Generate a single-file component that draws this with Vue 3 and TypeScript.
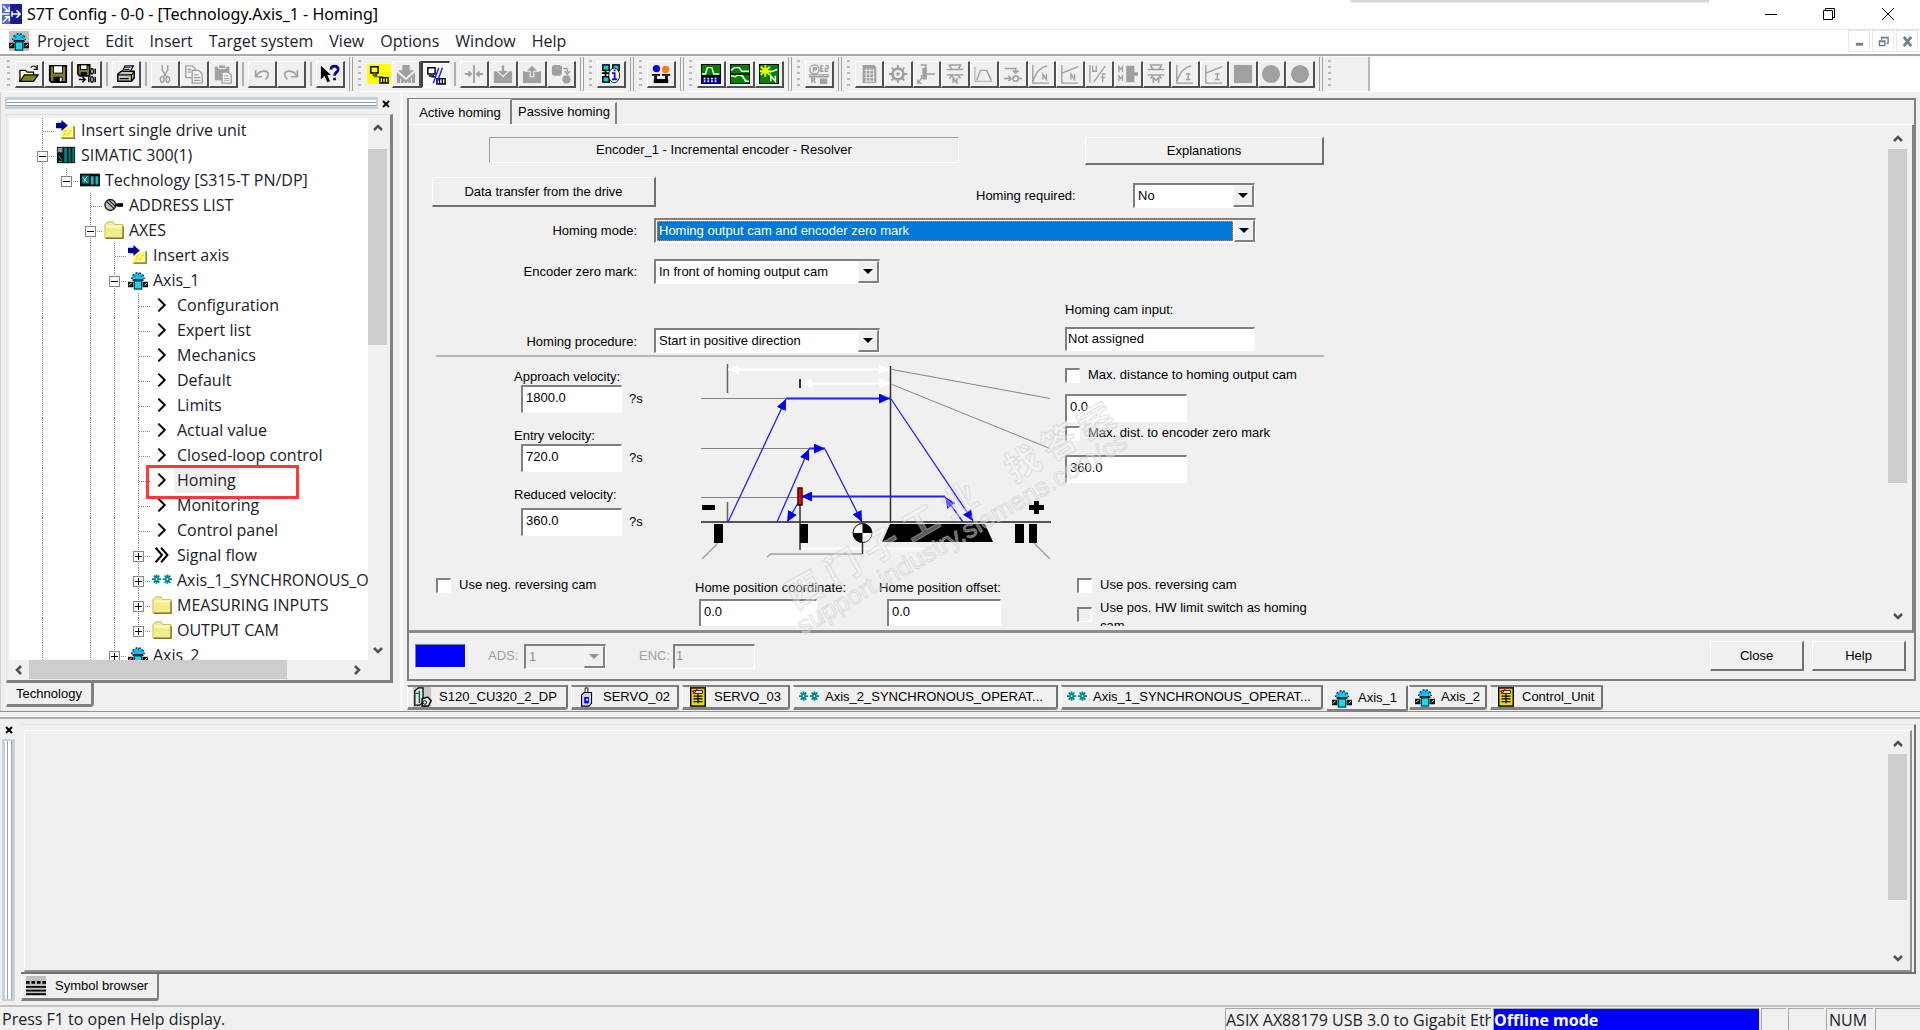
<script setup lang="ts">
import { ref } from 'vue'

interface TreeRow {
  text: string
  icon: string
  guides: number[]
  level: number
  box?: '-' | '+'
  last?: boolean
  selected?: boolean
}
interface Tool {
  name: string
  icon: string
  state?: 'yellow' | 'pressed'
  gapBefore?: boolean
}
interface DocTab {
  text: string
  icon: string
  width: number
  active?: boolean
}

const G = '#a0a0a0'
const gear = (x: number, y: number): string =>
  `<g stroke="#00868c" stroke-width="2"><path d="M${x} ${y - 5}v10M${x - 5} ${y}h10M${x - 3} ${y - 4}l6 8M${x + 3} ${y - 4}l-6 8"/></g><circle cx="${x}" cy="${y}" r="1" fill="#fff"/>`

const icons: Record<string, string> = {
  app: '<rect width="22" height="22" fill="#1c1c90"/><path d="M0 0h9v22H0z" fill="#4e6bd8"/><path d="M1 2l6 6M1 20l6-6M0 11h8M10 11h10M8 3v5H3M8 19v-5H3M16 7l4 4-4 4M11 8v6" stroke="#fff" stroke-width="1.6" fill="none"/>',
  axis: '<path d="M4 10a7 7 0 0 1 14 0z" fill="#00c8f8"/><path d="M4 10a7 7 0 0 1 14 0" fill="none" stroke="#00303c" stroke-dasharray="2 2" stroke-width="1.4"/><path d="M7 7h1M11 5h1M14 7h1" stroke="#00303c" stroke-width="1.5"/><path d="M0 13h6v6H0zM16 13h6v6h-6z" fill="#101010"/><path d="M1 17l3-3M18 17l3-3" stroke="#fff"/><path d="M5 11h12" stroke="#000" stroke-width="2"/><rect x="7" y="12" width="8" height="9" fill="#18d8f8" stroke="#004850" stroke-width="1.4"/>',
  open: '<path d="M1 19V7h6l2 2h7v3" fill="#ffffb0" stroke="#000" stroke-width="1.4"/><path d="M1 19l5-7h15l-5 7z" fill="#808020" stroke="#000" stroke-width="1.4"/><path d="M13 4c2-3 5-2 7 1M20 1v5h-4" fill="none" stroke="#000" stroke-width="1.3"/>',
  save: '<path d="M2 2h18v18H4l-2-2z" fill="#808020" stroke="#000" stroke-width="2"/><rect x="6" y="2" width="10" height="8" fill="#fff" stroke="#000"/><rect x="6" y="14" width="10" height="6" fill="#000"/><rect x="13" y="15" width="2" height="4" fill="#fff"/>',
  compile: '<path d="M1 1h13v12H3l-2-2z" fill="#808020" stroke="#000" stroke-width="1.8"/><rect x="4" y="1" width="7" height="5" fill="#fff" stroke="#000"/><rect x="4" y="9" width="7" height="4" fill="#000"/><path d="M2 17h7M6 14l3 3-3 3" fill="none" stroke="#000" stroke-width="1.6"/><path d="M20 5v6M20 14v6M13 14v6" stroke="#000" stroke-width="1.6"/><ellipse cx="16.500" cy="8" rx="1.500" ry="3" fill="none" stroke="#000" stroke-width="1.4"/><ellipse cx="16.500" cy="17" rx="1.500" ry="3" fill="none" stroke="#000" stroke-width="1.4"/>',
  print: '<path d="M7 8l3-6h9l-3 6" fill="#fff" stroke="#000" stroke-width="1.4"/><path d="M9 6h6M10 4h6" stroke="#000"/><path d="M2 11l4-3h14v7l-3 4H2z" fill="#c8c8c8" stroke="#000" stroke-width="1.6"/><path d="M2 12h15l3-3M17 12v7M4 16h10" stroke="#000" stroke-width="1.4" fill="none"/><path d="M11 14h4" stroke="#d8c800" stroke-width="1.6"/>',
  cut: `<g fill="none" stroke="${G}" stroke-width="1.6"><path d="M8 1v6l5 7M14 1v6L9 14"/><ellipse cx="8" cy="17" rx="2" ry="3"/><ellipse cx="14" cy="17" rx="2" ry="3"/></g>`,
  copy: `<g fill="#f4f4f4" stroke="${G}" stroke-width="1.5"><path d="M2 2h7l3 3v10H2z"/><path d="M9 7h7l4 4v10H9z"/><path d="M4 6h4M4 9h4M11 12h5M11 15h7M11 18h7"/></g>`,
  paste: `<path d="M2 3h16v15H2z" fill="${G}"/><path d="M6 1h8v4H6z" fill="${G}" stroke="#f0f0f0"/><path d="M10 9h7l3 3v9H10z" fill="#f4f4f4" stroke="${G}" stroke-width="1.5"/><path d="M12 13h5M12 16h6M12 18h6" stroke="${G}"/>`,
  undo: `<path d="M4 7v7h7M5 13c3-6 12-7 13-2 0 3-1 4-3 6" fill="none" stroke="${G}" stroke-width="1.8"/>`,
  redo: `<path d="M18 7v7h-7M17 13c-3-6-12-7-13-2 0 3 1 4 3 6" fill="none" stroke="${G}" stroke-width="1.8"/>`,
  whats: '<path d="M1 2v15l4-4 3 7 3-1-3-7h4z" fill="#000"/><path d="M12 6c0-5 8-5 8 0 0 3-4 3-4 7M16 15v3" fill="none" stroke="#00008b" stroke-width="3"/>',
  net: '<rect width="22" height="22" fill="#ff0"/><path d="M2 3h8v7H2zM4 12h5" fill="#ff0" stroke="#000" stroke-width="1.6"/><path d="M6 10v4h9v2" fill="none" stroke="#808000" stroke-width="1.6"/><path d="M12 21v-6h9v6z" fill="#ff0" stroke="#000" stroke-width="1.6"/><path d="M15 15v6M18 15v6" stroke="#000" stroke-width="1.4"/>',
  load: `<path d="M7 1h8v6h5l-9 8-9-8h5z" fill="${G}"/><path d="M1 9l10 9 10-9v12H1z" fill="${G}"/><path d="M5 21v-5M9 21v-2M13 21v-2M17 21v-6" stroke="#f0f0f0"/>`,
  netoff: '<path d="M2 3h8v7H2zM3 12h6" fill="#fff" stroke="#000" stroke-width="1.6"/><path d="M6 13h5M12 21v-6h9v6z" fill="#fff" stroke="#000" stroke-width="1.6"/><path d="M15 15v6M18 15v6" stroke="#000" stroke-width="1.4"/><path d="M8 20l6-17M12 20l6-17" stroke="#2020ff" stroke-width="1.6"/>',
  merge: `<path d="M11 1v20M1 11h7M5 8l3 3-3 3M21 11h-7M17 8l-3 3 3 3" fill="none" stroke="${G}" stroke-width="2"/>`,
  down: `<path d="M1 8h20v13H1z" fill="${G}"/><path d="M9 1h4v6h5l-7 7-7-7h5z" fill="${G}" stroke="#f0f0f0" stroke-width="1.2"/>`,
  up: `<path d="M1 8h20v13H1z" fill="${G}"/><path d="M9 14h4V8h5l-7-7-7 7h5z" fill="${G}" stroke="#f0f0f0" stroke-width="1.2"/>`,
  ram: `<rect x="1" y="1" width="11" height="12" rx="3" fill="${G}"/><path d="M13 5h5v4M15 8l3 3 3-3" fill="none" stroke="${G}" stroke-width="1.8"/><circle cx="17" cy="17" r="4.500" fill="${G}"/>`,
  info: '<g fill="#00d8d8" stroke="#000" stroke-width="1.6"><rect x="2" y="1" width="7" height="6"/><rect x="13" y="1" width="7" height="6"/><rect x="2" y="14" width="7" height="6"/></g><path d="M5 7v7M1 10h9" stroke="#000" stroke-width="2"/><ellipse cx="14.500" cy="12.500" rx="6" ry="8" fill="#fff" stroke="#000"/><path d="M14 6h2v2h-2z" fill="#00f"/><path d="M12 10h3v7M12 17h6" stroke="#00f" stroke-width="2" fill="none"/>',
  people: '<circle cx="6" cy="5" r="4" fill="#0000ff"/><circle cx="16" cy="6" r="4" fill="#ff8000"/><path d="M1 12h9M12 12h9" stroke="#000" stroke-width="2"/><path d="M5 13v5h12v-5" fill="none" stroke="#000" stroke-width="3"/><path d="M3 19h16" stroke="#000" stroke-width="4"/>',
  scope: '<rect width="22" height="22" fill="#000"/><rect x="1" y="1" width="20" height="11" fill="#008000"/><path d="M1 11h4l2-7h5l2 7h6" fill="none" stroke="#fff" stroke-width="1.6"/><rect x="1" y="14" width="20" height="7" fill="#000080"/><path d="M3 16h16M3 19h16" stroke="#e0e0ff" stroke-width="2" stroke-dasharray="2 2"/>',
  trace: '<rect width="22" height="22" fill="#000"/><rect x="1" y="1" width="20" height="20" fill="#008000"/><path d="M1 7l4-3h5l3 4h8M1 13l5 1 2-2 6 1 3 6h4M12 12l6 7" fill="none" stroke="#fff" stroke-width="1.6"/><path d="M1 11h20" stroke="#000" stroke-width="1.6"/>',
  auto: '<rect width="22" height="22" fill="#000"/><rect x="1" y="1" width="20" height="20" fill="#008000"/><path d="M7 1v13M2 3l10 9M12 3L2 12M1 8h12" stroke="#ff0" stroke-width="2"/><path d="M12 9l8-3M13 19v-6l5 6v-6" fill="none" stroke="#fff" stroke-width="1.6"/>',
  enc: `<g fill="none" stroke="${G}" stroke-width="1.5"><circle cx="6" cy="6" r="5"/><path d="M5 9V4h3v2H5M12 2h4M12 5h3M12 8h4M13 2v6M18 2h3v3h-3v3h3M1 12h20v2H1zM6 11v2M16 11v2M3 21v-5h3v2H3M5 18l2 3"/></g><path d="M12 16h8v6h-8z" fill="${G}"/>`,
  d1: `<path d="M4 1h13l2 3v17H4z" fill="${G}"/><path d="M6 7h11M6 11h11M6 15h11M6 19h11M8 5v15M12 5v15M16 5v15" stroke="#f0f0f0"/>`,
  d2: `<g stroke="${G}" fill="none"><circle cx="11" cy="11" r="6" stroke-width="3"/><path d="M11 1v4M11 17v4M1 11h4M17 11h4M4 4l3 3M15 15l3 3M18 4l-3 3M7 15l-3 3" stroke-width="2"/></g><circle cx="11" cy="11" r="2" fill="${G}"/>`,
  d3: `<path d="M7 4h5v13H7z" fill="${G}"/><path d="M5 1h6v3M12 11h9M6 12v4l-4 5M2 17v4h4" fill="none" stroke="${G}" stroke-width="1.6"/>`,
  d4: `<path d="M2 6h18M2 12h18M4 1h14M5 2l3 4M17 2l-3 4M5 16l3-4M17 16l-3-4M9 21v-6l4 6v-6" fill="none" stroke="${G}" stroke-width="1.7"/>`,
  d5: `<path d="M1 3v16h19" fill="none" stroke="${G}"/><path d="M3 18l4-11h7l5 11" fill="none" stroke="${G}" stroke-width="1.6"/>`,
  d6: `<path d="M2 5h12v5M11 7l3 3 3-3M1 16h8M6 13l3 3-3 3M17 16h4" fill="none" stroke="${G}" stroke-width="1.8"/><circle cx="14" cy="16" r="3" fill="none" stroke="${G}" stroke-width="1.8"/>`,
  d7: `<path d="M2 1v20h18M2 20C5 10 9 4 18 2M13 17v-6l4 6v-6" fill="none" stroke="${G}" stroke-width="1.5"/>`,
  d8: `<path d="M2 1v20h18M2 10l18-7M12 17v-6l4 6v-6" fill="none" stroke="${G}" stroke-width="1.5"/>`,
  d9: `<path d="M1 1v20M5 20L18 2M4 2v6h4V2M18 11h-3v9M13 15h5" fill="none" stroke="${G}" stroke-width="1.5"/>`,
  d10: `<path d="M9 2h9v18H9zM18 9h4v4h-4z" fill="${G}"/><path d="M1 9V3l2 3 2-3v6M1 19v-6l2 3 2-3v6" fill="none" stroke="${G}" stroke-width="1.4"/>`,
  d11: `<path d="M2 6h18M2 12h18M4 1h14M5 2l3 4M17 2l-3 4M5 16l3-4M17 16l-3-4M8 21v-6l3 3 3-3v6" fill="none" stroke="${G}" stroke-width="1.7"/>`,
  d12: `<path d="M2 1v20h18M2 20C5 10 9 4 18 2M12 11h5M12 17h5M14.500 11v6" fill="none" stroke="${G}" stroke-width="1.5"/>`,
  d13: `<path d="M2 1v20h18M2 10l18-7M12 11h5M12 17h5M14.500 11v6" fill="none" stroke="${G}" stroke-width="1.5"/>`,
  square: `<rect x="1" y="1" width="20" height="20" fill="${G}"/>`,
  circle: `<circle cx="11" cy="11" r="10" fill="${G}"/>`,
  insert: '<path d="M6 7h14v13H6z" fill="#ffff80"/><path d="M6 20h14V7" fill="none" stroke="#908860" stroke-width="2"/><path d="M8 17l3-3M12 17l3-3M15 13l2-2M9 13l2-2" stroke="#ffc820" stroke-width="1.4"/><path d="M0 3h6V0l7 6-7 6V9H0z" fill="#00008b"/>',
  plc: '<rect x="1" y="2" width="20" height="18" fill="#101818"/><path d="M9 3h3v16H9zM14 3h2v16h-2zM18 3h2v16h-2z" fill="#008080"/><path d="M2 3h5v5H2z" fill="#80a0a0"/><path d="M3 12l3 4M3 18h4" stroke="#20c0c0"/>',
  tech: '<rect x="0" y="4" width="22" height="14" fill="#101010"/><path d="M2 6h8v9H2z" fill="#008080"/><path d="M3 8l5 6M8 7l-4 6" stroke="#d0ffff"/><path d="M12 7h3v9h-3zM17 7h3v9h-3z" fill="#00c0c8"/>',
  address: '<circle cx="7" cy="11" r="6" fill="#c0c0c0" stroke="#202020" stroke-width="1.5"/><path d="M3 7l8 8M5 5l8 8" stroke="#202020" stroke-width="1.3"/><path d="M13 11h3" stroke="#000" stroke-width="3"/><path d="M15 9h6v4h-6z" fill="#000"/>',
  folder: '<path d="M1 20V5l3-3h6l2 3h9v15z" fill="#f4ec8c" stroke="#c8b850"/><path d="M2 7h18" stroke="#fffbd0" stroke-width="2"/><path d="M2 20h19V7" fill="none" stroke="#807830" stroke-width="1.6"/>',
  chevron: '<path d="M7 4l7 7-7 7" fill="none" stroke="#000" stroke-width="2.2"/>',
  flow: '<path d="M4 3l7 8-7 8M10 3l7 8-7 8" fill="none" stroke="#000" stroke-width="2.2"/>',
  sync: gear(5, 10) + gear(17, 10),
  drive: '<rect width="20" height="22" fill="#c8c8c8"/><path d="M2 4l4-3h5v16l-4 3H2z" fill="#e8e8e8" stroke="#000" stroke-width="1.4"/><path d="M7 4v14M3 7h3" stroke="#006060" stroke-width="1.6"/><path d="M10 13l6-2 4 4-3 6h-7z" fill="#e8e8e8" stroke="#000" stroke-width="1.6"/><circle cx="13" cy="17" r="2" fill="none" stroke="#000"/>',
  servo: '<path d="M9 7V1h3v6" fill="#fff" stroke="#000"/><path d="M5 9l3-3h8v12l-3 3H5z" fill="#d0d0f0" stroke="#000" stroke-width="1.2"/><path d="M8 11h5v7H8z" fill="#0000e0"/><path d="M10 14h2" stroke="#fff" stroke-width="2"/>',
  unit: '<rect x="3" y="1" width="16" height="20" fill="#e8d810" stroke="#000" stroke-width="1.6"/><path d="M6 4h10v3H6z" fill="#fff" stroke="#000"/><path d="M6 10h10M6 13h10M6 16h10M11 8v10" stroke="#000" stroke-width="1.4"/><path d="M5 4l2 3 3-5" fill="none" stroke="#e00000" stroke-width="1.4"/>',
  symbols: '<rect width="22" height="22" fill="#c0c0c0"/><path d="M0 7h22" stroke="#000" stroke-width="3" stroke-dasharray="4 2"/><path d="M0 12h22M0 16h22M0 20h22" stroke="#000" stroke-width="2"/>',
}

const menus = ['Project', 'Edit', 'Insert', 'Target system', 'View', 'Options', 'Window', 'Help']

const toolGroups: Tool[][] = [
  [
    { name: 'Open', icon: 'open' },
    { name: 'Save', icon: 'save' },
    { name: 'Save and compile', icon: 'compile' },
    { name: 'Print', icon: 'print', gapBefore: true },
    { name: 'Cut', icon: 'cut', gapBefore: true },
    { name: 'Copy', icon: 'copy' },
    { name: 'Paste', icon: 'paste' },
    { name: 'Undo', icon: 'undo', gapBefore: true },
    { name: 'Redo', icon: 'redo' },
    { name: 'Context help', icon: 'whats', gapBefore: true },
  ],
  [
    { name: 'Connect', icon: 'net', state: 'yellow' },
    { name: 'Load', icon: 'load' },
    { name: 'Disconnect', icon: 'netoff', state: 'pressed' },
    { name: 'Compare', icon: 'merge', gapBefore: true },
    { name: 'Download', icon: 'down' },
    { name: 'Upload', icon: 'up' },
    { name: 'Copy RAM to ROM', icon: 'ram' },
  ],
  [{ name: 'Accessible nodes', icon: 'info' }],
  [{ name: 'Control priority', icon: 'people' }],
  [
    { name: 'Trace', icon: 'scope' },
    { name: 'Measuring', icon: 'trace' },
    { name: 'Automatic tuning', icon: 'auto' },
  ],
  [{ name: 'Encoder', icon: 'enc' }],
  ['d1', 'd2', 'd3', 'd4', 'd5', 'd6', 'd7', 'd8', 'd9', 'd10', 'd11', 'd12', 'd13', 'square', 'circle', 'circle'].map(
    (icon, i) => ({ name: `Drive function ${i + 1}`, icon }),
  ),
]

const leaf = (text: string, selected = false): TreeRow => ({ text, icon: 'chevron', guides: [1, 0, 1, 1], level: 4, selected })

const tree: TreeRow[] = [
  { text: 'Insert single drive unit', icon: 'insert', guides: [], level: 0 },
  { text: 'SIMATIC 300(1)', icon: 'plc', guides: [], level: 0, box: '-' },
  { text: 'Technology [S315-T PN/DP]', icon: 'tech', guides: [1], level: 1, box: '-', last: true },
  { text: 'ADDRESS LIST', icon: 'address', guides: [1, 0], level: 2 },
  { text: 'AXES', icon: 'folder', guides: [1, 0], level: 2, box: '-' },
  { text: 'Insert axis', icon: 'insert', guides: [1, 0, 1], level: 3 },
  { text: 'Axis_1', icon: 'axis', guides: [1, 0, 1], level: 3, box: '-' },
  leaf('Configuration'),
  leaf('Expert list'),
  leaf('Mechanics'),
  leaf('Default'),
  leaf('Limits'),
  leaf('Actual value'),
  leaf('Closed-loop control'),
  leaf('Homing', true),
  leaf('Monitoring'),
  leaf('Control panel'),
  { text: 'Signal flow', icon: 'flow', guides: [1, 0, 1, 1], level: 4, box: '+' },
  { text: 'Axis_1_SYNCHRONOUS_O', icon: 'sync', guides: [1, 0, 1, 1], level: 4, box: '+' },
  { text: 'MEASURING INPUTS', icon: 'folder', guides: [1, 0, 1, 1], level: 4, box: '+' },
  { text: 'OUTPUT CAM', icon: 'folder', guides: [1, 0, 1, 1], level: 4, box: '+', last: true },
  { text: 'Axis_2', icon: 'axis', guides: [1, 0, 1], level: 3, box: '+' },
]

const docTabs: DocTab[] = [
  { text: 'S120_CU320_2_DP', icon: 'drive', width: 161 },
  { text: 'SERVO_02', icon: 'servo', width: 108 },
  { text: 'SERVO_03', icon: 'unit', width: 108 },
  { text: 'Axis_2_SYNCHRONOUS_OPERAT...', icon: 'sync', width: 265 },
  { text: 'Axis_1_SYNCHRONOUS_OPERAT...', icon: 'sync', width: 262 },
  { text: 'Axis_1', icon: 'axis', width: 82, active: true },
  { text: 'Axis_2', icon: 'axis', width: 78 },
  { text: 'Control_Unit', icon: 'unit', width: 113 },
]

const approach = ref('1800.0')
const entry = ref('720.0')
const reduced = ref('360.0')
const maxCam = ref('0.0')
const maxZero = ref('360.0')
const coordinate = ref('0.0')
const offset = ref('0.0')
const camInput = ref('Not assigned')
const encoderNo = ref('1')
</script>

<template>
  <div class="window">
    <header class="titlebar">
      <svg class="app-icon" viewBox="0 0 22 22" v-html="icons.app"></svg>
      <span class="title">S7T Config - 0-0 - [Technology.Axis_1 - Homing]</span>
      <div class="overlay-shadow"></div>
      <div class="win-buttons">
        <button type="button" aria-label="Minimize"><svg viewBox="0 0 12 12"><path d="M0 6.500h12" /></svg></button>
        <button type="button" aria-label="Restore"><svg viewBox="0 0 12 12"><path d="M.5 2.500h9v9h-9zM2.500 2.500v-2h9v9h-2" /></svg></button>
        <button type="button" aria-label="Close"><svg viewBox="0 0 12 12"><path d="M0 0l12 12M12 0L0 12" /></svg></button>
      </div>
    </header>

    <nav class="menubar">
      <svg class="menu-icon" viewBox="0 0 22 22" v-html="icons.axis"></svg>
      <button v-for="m in menus" :key="m" type="button" class="menu">{{ m }}</button>
      <div class="mdi">
        <button type="button" aria-label="Minimize document"><svg viewBox="0 0 12 12"><path d="M2 9h8" stroke-width="3" /></svg></button>
        <button type="button" aria-label="Restore document"><svg viewBox="0 0 12 12"><path d="M1.500 5.500h6v5h-6zM1 6h7M4 4V1.500h7V8H9M4 2h7" stroke-width="1.500" /></svg></button>
        <button type="button" aria-label="Close document"><svg viewBox="0 0 12 12"><path d="M2 1l8 10M10 1L2 11" stroke-width="3" /></svg></button>
      </div>
    </nav>

    <div class="toolbar">
      <div v-for="(g, gi) in toolGroups" :key="gi" class="tool-group" :class="{ dense: g.length > 10 }">
        <span class="grip"></span>
        <div class="tools">
          <template v-for="t in g" :key="t.name">
            <span v-if="t.gapBefore" class="tool-sep"></span>
            <button type="button" class="tool" :class="t.state" :aria-label="t.name">
              <svg viewBox="0 0 22 22" v-html="icons[t.icon]"></svg>
            </button>
          </template>
        </div>
      </div>
      <div class="tool-group tail"><span class="grip"></span></div>
      <div class="tool-rest"></div>
    </div>

    <div class="upper">
      <aside class="side">
        <div class="side-head">
          <div class="gripper"></div>
          <button type="button" class="tiny-close" aria-label="Close project tree"><svg viewBox="0 0 8 8"><path d="M1 1l6 6M7 1L1 7" /></svg></button>
        </div>
        <div class="tree-frame">
          <div class="tree-area">
            <ul class="tree">
              <li v-for="(r, i) in tree" :key="i" class="tree-row">
                <span v-for="(on, k) in r.guides" :key="k" class="guide">
                  <svg viewBox="0 0 24 25"><path v-if="on" d="M12.500 0v25" class="dots" /></svg>
                </span>
                <span class="guide">
                  <svg viewBox="0 0 24 25">
                    <path :d="r.last ? 'M12.500 0v13' : 'M12.500 0v25'" class="dots" />
                    <path d="M13 13.500h11" class="dots" />
                    <template v-if="r.box">
                      <rect x="7.500" y="8.500" width="10" height="10" fill="#fff" stroke="#848484" />
                      <path :d="r.box === '+' ? 'M9 13.500h7M12.500 10v7' : 'M9 13.500h7'" stroke="#000" />
                    </template>
                  </svg>
                </span>
                <svg class="tree-icon" viewBox="0 0 22 22" v-html="icons[r.icon]"></svg>
                <span class="tree-text" :class="{ selected: r.selected }">{{ r.text }}</span>
                <span v-if="r.selected" class="marker"></span>
              </li>
            </ul>
            <div class="vscroll">
              <svg class="arrow" viewBox="0 0 20 20"><path d="M6 12l4-4 4 4" /></svg>
              <div class="track"><div class="thumb tree-thumb"></div></div>
              <svg class="arrow" viewBox="0 0 20 20"><path d="M6 8l4 4 4-4" /></svg>
            </div>
          </div>
          <div class="hscroll">
            <svg class="arrow" viewBox="0 0 20 20"><path d="M12 6l-4 4 4 4" /></svg>
            <div class="htrack"><div class="hthumb"></div></div>
            <svg class="arrow" viewBox="0 0 20 20"><path d="M8 6l4 4-4 4" /></svg>
          </div>
        </div>
        <button type="button" class="side-tab">Technology</button>
      </aside>

      <main class="main">
        <section class="frame">
          <div class="page-tabs">
            <button type="button" class="page-tab active">Active homing</button>
            <button type="button" class="page-tab">Passive homing</button>
          </div>
          <div class="page">
            <form class="form" @submit.prevent>
              <div class="row top">
                <div class="encoder-box">Encoder_1 - Incremental encoder - Resolver</div>
                <button type="button" class="btn wide">Explanations</button>
              </div>
              <div class="row transfer">
                <button type="button" class="btn data">Data transfer from the drive</button>
                <label class="required" for="required">Homing required:</label>
                <span class="combo small">
                  <select id="required"><option>No</option><option>Yes</option></select>
                  <i class="drop"></i>
                </span>
              </div>
              <div class="row mode">
                <label class="field-label" for="mode">Homing mode:</label>
                <span class="combo full focused">
                  <select id="mode"><option>Homing output cam and encoder zero mark</option></select>
                  <i class="drop"></i>
                </span>
              </div>
              <div class="row zero">
                <label class="field-label" for="zero">Encoder zero mark:</label>
                <span class="combo medium">
                  <select id="zero"><option>In front of homing output cam</option></select>
                  <i class="drop"></i>
                </span>
              </div>
              <div class="row procedure">
                <label class="field-label" for="procedure">Homing procedure:</label>
                <span class="combo medium">
                  <select id="procedure"><option>Start in positive direction</option></select>
                  <i class="drop"></i>
                </span>
                <div class="cam-input">
                  <label for="cam">Homing cam input:</label>
                  <input id="cam" v-model="camInput" type="text" />
                </div>
              </div>
              <hr class="rule" />
              <div class="profile">
                <div class="velocities">
                  <div class="velocity">
                    <label for="approach">Approach velocity:</label>
                    <div><input id="approach" v-model="approach" type="text" /><span>?s</span></div>
                  </div>
                  <div class="velocity">
                    <label for="entry">Entry velocity:</label>
                    <div><input id="entry" v-model="entry" type="text" /><span>?s</span></div>
                  </div>
                  <div class="velocity spaced">
                    <label for="reduced">Reduced velocity:</label>
                    <div><input id="reduced" v-model="reduced" type="text" /><span>?s</span></div>
                  </div>
                </div>

                <svg class="diagram" viewBox="700 360 352 204" role="img" aria-label="Homing velocity profile">
                  <defs>
                    <marker id="blue" viewBox="0 0 11 10" refX="11" refY="5" markerWidth="11" markerHeight="10" markerUnits="userSpaceOnUse" orient="auto-start-reverse"><path d="M0 0l11 5-11 5z" fill="#0000ff" /></marker>
                    <marker id="white" viewBox="0 0 11 10" refX="11" refY="5" markerWidth="11" markerHeight="10" markerUnits="userSpaceOnUse" orient="auto-start-reverse"><path d="M0 0l11 5-11 5z" fill="#fff" /></marker>
                  </defs>
                  <g stroke="#848484" fill="none">
                    <path d="M701 398.500h86M701 448.500h109M701 497.500h98" />
                    <path d="M727.500 364v29M727.500 502v20" stroke="#606060" stroke-width="1.500" />
                    <path d="M800 379v9" stroke="#303030" stroke-width="2" />
                    <path d="M892 369.500l158 29M892 384.500l158 64" />
                    <path d="M702 559l16-16M1034 543l16 16M767 557l4-3h91" stroke="#a0a0a0" stroke-width="1.500" />
                  </g>
                  <g stroke="#fff" stroke-width="2" fill="none">
                    <path d="M728 369.500h162" marker-start="url(#white)" marker-end="url(#white)" />
                    <path d="M801 383.500h89" marker-start="url(#white)" marker-end="url(#white)" />
                    <path d="M802 548.500h130" />
                  </g>
                  <path d="M701 522h350" stroke="#202020" stroke-width="1.500" />
                  <path d="M890.500 366v157M800 505v45M862.500 543v11" stroke="#303030" stroke-width="1.500" />
                  <g stroke="#2020ff" stroke-width="1.300" fill="none">
                    <path d="M728 522l58-123" marker-end="url(#blue)" />
                    <path d="M786 398.500h104" stroke-width="2" marker-end="url(#blue)" />
                    <path d="M891 399l82 122" marker-end="url(#blue)" />
                    <path d="M963 522l-18-25" marker-end="url(#blue)" />
                    <path d="M945 496.500H801" stroke-width="2" marker-end="url(#blue)" />
                    <path d="M798 503l-11 19" marker-end="url(#blue)" />
                    <path d="M777 522l32-73" marker-end="url(#blue)" />
                    <path d="M809 448.500h16" stroke-width="2" marker-end="url(#blue)" />
                    <path d="M825 449l37 73" marker-end="url(#blue)" />
                  </g>
                  <rect x="798" y="488" width="4" height="17" fill="#f00" stroke="#400000" stroke-width="1.500" />
                  <path d="M702 505h13v5h-13zM714 524h9v19h-9zM800 524h8v19h-8zM1015 524h9v19h-9zM1029 524h8v19h-8zM890 524h95l8 18H882zM1034 501h5v4h5v5h-5v4h-5v-4h-5v-5h5z" fill="#000" />
                  <circle cx="862.500" cy="533" r="9.500" fill="#fff" stroke="#000" />
                  <path d="M862.500 533V523.500a9.500 9.500 0 0 1 9.500 9.500zM862.500 533v9.500a9.500 9.500 0 0 1-9.500-9.500z" fill="#000" />
                </svg>

                <div class="limits">
                  <label class="check"><input type="checkbox" />Max. distance to homing output cam</label>
                  <input v-model="maxCam" type="text" aria-label="Max. distance to homing output cam" class="limit-cam" />
                  <label class="check"><input type="checkbox" />Max. dist. to encoder zero mark</label>
                  <input v-model="maxZero" type="text" aria-label="Max. dist. to encoder zero mark" class="limit-zero" />
                </div>
              </div>
              <div class="positions">
                <label class="check neg"><input type="checkbox" />Use neg. reversing cam</label>
                <div class="position">
                  <label for="coord">Home position coordinate:</label>
                  <input id="coord" v-model="coordinate" type="text" />
                </div>
                <div class="position">
                  <label for="offset">Home position offset:</label>
                  <input id="offset" v-model="offset" type="text" />
                </div>
                <div class="pos-cams">
                  <label class="check"><input type="checkbox" />Use pos. reversing cam</label>
                  <label class="check two-line"><input type="checkbox" disabled /><span>Use pos. HW limit switch as homing cam</span></label>
                </div>
              </div>
            </form>
            <div class="vscroll">
              <svg class="arrow" viewBox="0 0 20 20"><path d="M6 12l4-4 4 4" /></svg>
              <div class="track"><div class="thumb page-thumb"></div></div>
              <svg class="arrow" viewBox="0 0 20 20"><path d="M6 8l4 4 4-4" /></svg>
            </div>
          </div>
          <footer class="actions">
            <div class="swatch"></div>
            <label for="ads" class="dim ads">ADS:</label>
            <span class="combo off">
              <select id="ads" disabled><option>1</option></select>
              <i class="drop"></i>
            </span>
            <label for="enc" class="dim enc">ENC:</label>
            <input id="enc" v-model="encoderNo" type="text" disabled class="enc-input" />
            <div class="action-buttons">
              <button type="button" class="btn">Close</button>
              <button type="button" class="btn">Help</button>
            </div>
          </footer>
          <svg class="watermark" viewBox="0 0 400 260" aria-hidden="true">
            <g transform="rotate(-30 24 251)">
              <text x="30" y="225" font-size="35" class="cjk">西 门 子 工 业&#160;&#160;&#160; 找&#8201;答&#8201;案</text>
              <text x="24" y="251" font-size="26">support.industry.siemens.com/cs</text>
            </g>
          </svg>
        </section>
        <nav class="doc-tabs">
          <button v-for="t in docTabs" :key="t.text" type="button" class="doc-tab" :class="{ active: t.active }" :style="{ width: t.width + 'px' }">
            <svg viewBox="0 0 22 22" v-html="icons[t.icon]"></svg>
            <span>{{ t.text }}</span>
          </button>
        </nav>
      </main>
    </div>

    <section class="lower">
      <div class="lower-grip">
        <button type="button" class="tiny-close" aria-label="Close symbol browser"><svg viewBox="0 0 8 8"><path d="M1 1l6 6M7 1L1 7" /></svg></button>
        <div class="gripper vertical"></div>
      </div>
      <div class="lower-body">
        <div class="lower-frame">
          <div class="lower-inner">
            <div class="vscroll">
              <svg class="arrow" viewBox="0 0 20 20"><path d="M6 12l4-4 4 4" /></svg>
              <div class="track"><div class="thumb lower-thumb"></div></div>
              <svg class="arrow" viewBox="0 0 20 20"><path d="M6 8l4 4 4-4" /></svg>
            </div>
          </div>
        </div>
        <button type="button" class="browser-tab"><svg viewBox="0 0 22 22" v-html="icons.symbols"></svg>Symbol browser</button>
      </div>
    </section>

    <footer class="status">
      <span class="hint">Press F1 to open Help display.</span>
      <span class="cell adapter">ASIX AX88179 USB 3.0 to Gigabit Eth</span>
      <span class="cell offline">Offline mode</span>
      <span class="cell c1"></span>
      <span class="cell c2"></span>
      <span class="cell num">NUM</span>
      <span class="cell c3"></span>
    </footer>
  </div>
</template>

<style>
html,
body {
  margin: 0;
  overflow: hidden;
  background: #f0f0f0;
}
</style>

<style scoped>
* {
  box-sizing: border-box;
}
button,
input,
select {
  font: inherit;
  color: inherit;
  margin: 0;
  border-radius: 0;
}
.window {
  height: 100vh;
  display: flex;
  flex-direction: column;
  background: #f0f0f0;
  color: #000;
  font: 13px/16px 'Liberation Sans', sans-serif;
}
.titlebar,
.menubar,
.tree,
.status {
  font-family: 'Open Sans', sans-serif;
  font-size: 16px;
}

/* title bar */
.titlebar {
  position: relative;
  flex: none;
  height: 30px;
  padding-bottom: 2px;
  display: flex;
  align-items: center;
  background: #fff;
  border-bottom: 1px solid #e2e2e2;
}
.title {
  font-family: 'Noto Sans', sans-serif;
  font-size: 16px;
}
.app-icon {
  width: 20px;
  height: 20px;
  margin: 0 5px 0 2px;
}
.overlay-shadow {
  position: absolute;
  top: 0;
  right: 11%;
  width: 358px;
  height: 2px;
  background: #d4d4d4;
  box-shadow: 0 0 3px #ccc;
}
.win-buttons {
  margin-left: auto;
  padding-right: 2px;
  display: flex;
}
.win-buttons button {
  width: 58px;
  height: 26px;
  padding: 0;
  border: 0;
  background: none;
}
.win-buttons button:last-child {
  width: 60px;
}
.win-buttons svg {
  width: 12px;
  height: 12px;
  fill: none;
  stroke: #000;
}

/* menu */
.menubar {
  flex: none;
  height: 26px;
  padding-bottom: 2px;
  display: flex;
  align-items: center;
  background: #fff;
  border-bottom: 2px solid #a8a8a8;
  color: #202028;
}
.menu-icon {
  width: 20px;
  height: 20px;
  margin: 0 0 0 9px;
  background: #c0c0c0;
}
.menu {
  padding: 0 8px;
  height: 22px;
  line-height: 22px;
  border: 0;
  background: none;
}
.mdi {
  margin-left: auto;
  display: flex;
  gap: 2px;
  padding-right: 2px;
}
.mdi button {
  width: 22px;
  height: 22px;
  padding: 0;
  border: 1px solid #e8e8e8;
  background: #fff;
}
.mdi svg {
  width: 11px;
  height: 11px;
  fill: none;
  stroke: #708090;
}

/* toolbar */
.toolbar {
  flex: none;
  height: 36px;
  display: flex;
  border-top: 1px solid #f8f8f8;
  border-bottom: 1px solid #fff;
}
.tool-group {
  display: flex;
  align-items: center;
  padding-left: 5px;
  padding-right: 4px;
  border-right: 4px double #a0a0a0;
}
.tool-group:first-child {
  padding-left: 7px;
}
.tool-group.tail {
  width: 47px;
  border-right: 2px solid #b8b8b8;
}
.tool-rest {
  flex: 1;
  background: #fff;
}
.grip {
  width: 3px;
  height: 28px;
  margin-right: 5px;
  background: repeating-linear-gradient(#b8b8b8 0 2px, transparent 2px 6px);
}
.tools {
  display: flex;
}
.dense .tools {
  width: 460px;
}
.dense .tool {
  flex: 1;
}
.tool {
  width: 29px;
  height: 27px;
  padding: 0;
  display: flex;
  align-items: center;
  justify-content: center;
  background: #f0f0f0;
  border: solid;
  border-width: 1px 2px 2px 1px;
  border-color: #fff #505050 #505050 #fff;
}
.tool svg {
  width: 20px;
  height: 20px;
}
.tool.yellow {
  width: 26px;
  background: #ff0;
  border: 3px solid #f0f0f0;
  border-width: 3px 1px 4px;
}
.tool.pressed {
  background: #fafafa;
  border-width: 2px 1px 1px 2px;
  border-color: #404040 #fff #fff #404040;
}
.tool-sep {
  width: 2px;
  height: 24px;
  align-self: center;
  margin: 0 4px;
  background: #b0b0b0;
}

/* project tree */
.upper {
  flex: 620 1 0;
  min-height: 0;
  display: flex;
  border-bottom: 1px solid #909090;
}
.side {
  flex: none;
  width: 403px;
  padding: 5px 7px 4px 4px;
  display: flex;
  flex-direction: column;
  border-left: 1px solid #d0d0d0;
  border-right: 3px solid #fafafa;
}
.side-head {
  flex: none;
  height: 17px;
  display: flex;
}
.gripper {
  flex: 1;
  height: 12px;
  border: solid #c4d2e0;
  border-width: 3px 2px;
  background: linear-gradient(#fff 0 2px, #a0a0a0 2px 3px, #fff 3px 5px, #a0a0a0 5px);
}
.tiny-close {
  width: 15px;
  height: 14px;
  padding: 0;
  border: 0;
  background: none;
  display: flex;
  align-items: center;
  justify-content: center;
}
.tiny-close svg {
  width: 8px;
  height: 8px;
  fill: none;
  stroke: #000;
  stroke-width: 2;
}
.tree-frame {
  flex: 1;
  min-height: 0;
  margin-left: 1px;
  padding: 3px 3px 0 2px;
  display: flex;
  flex-direction: column;
  border: solid;
  border-width: 1px 3px 3px 1px;
  border-color: #e0e0e0 #808080 #808080 #e0e0e0;
}
.tree-area {
  flex: 1;
  min-height: 0;
  display: flex;
}
.tree {
  flex: 1;
  margin: 0;
  padding: 0 0 0 21px;
  overflow: hidden;
  list-style: none;
  background: #fff;
  color: #202028;
}
.tree-row {
  position: relative;
  height: 25px;
  display: flex;
  align-items: center;
  white-space: nowrap;
}
.guide,
.guide svg {
  flex: none;
  display: block;
  width: 24px;
  height: 25px;
}
.guide svg {
  shape-rendering: crispEdges;
}
.dots {
  stroke: #808080;
  stroke-dasharray: 1 1;
  fill: none;
}
.tree-icon {
  flex: none;
  width: 20px;
  height: 20px;
  margin: 0 2px 2px;
}
.tree-text {
  padding: 0 3px;
  line-height: 25px;
}
.tree-text.selected {
  background: #f0f0f0;
}
.marker {
  position: absolute;
  z-index: 1;
  top: -3px;
  left: 116px;
  width: 153px;
  height: 34px;
  border: 3px solid #ff3838;
}
.vscroll {
  flex: none;
  width: 19px;
  display: flex;
  flex-direction: column;
  background: #f0f0f0;
}
.arrow {
  flex: none;
  width: 20px;
  height: 20px;
  fill: none;
  stroke: #505050;
  stroke-width: 2.5;
}
.track {
  flex: 1;
  min-height: 0;
}
.thumb {
  background: #cdcdcd;
}
.tree-thumb {
  margin-top: 11px;
  height: 39%;
}
.hscroll {
  flex: none;
  height: 20px;
  display: flex;
  padding-right: 20px;
}
.htrack {
  flex: 1;
}
.hthumb {
  width: 81%;
  height: 19px;
  background: #cdcdcd;
}
.side-tab {
  flex: none;
  align-self: flex-start;
  width: 88px;
  height: 24px;
  margin-left: 1px;
  padding: 0;
  border: solid;
  border-width: 0 3px 3px 1px;
  border-color: #808080 #808080 #808080 #f8f8f8;
  border-radius: 0 0 4px 0;
  background: #f0f0f0;
}

/* homing page */
.main {
  flex: 1;
  min-width: 0;
  padding: 6px 4px 0 4px;
  display: flex;
  flex-direction: column;
}
.frame {
  position: relative;
  flex: 1;
  min-height: 0;
  display: flex;
  flex-direction: column;
  border: 2px solid #808080;
}
.page-tabs {
  flex: none;
  height: 25px;
  display: flex;
  align-items: flex-end;
  border-bottom: 1px solid #fff;
}
.page-tab {
  height: 22px;
  width: 105px;
  padding: 0 0 3px;
  border: solid;
  border-width: 1px 2px 0 1px;
  border-color: #fafafa #808080 #fff #f0f0f0;
  background: #f0f0f0;
}
.page-tab.active {
  height: 25px;
  width: 103px;
  padding: 2px 0 0;
  border-color: #fafafa #808080 #f0f0f0 #fafafa;
}
.page {
  flex: 1;
  min-height: 0;
  display: flex;
  border-right: 2px solid #808080;
  border-bottom: 3px solid #8c8c8c;
}
.page > .vscroll {
  margin: 4px 5px 4px 0;
}
.page-thumb {
  height: 73%;
}
.form {
  flex: 1;
  min-width: 0;
  margin-bottom: 4px;
  padding: 12px 0 0 23px;
  overflow: hidden;
}
.row {
  display: flex;
}
.row.top {
  height: 28px;
}
.encoder-box {
  width: 470px;
  height: 26px;
  margin: 0 126px 0 57px;
  border: solid 1px;
  border-color: #a0a0a0 #fff #fff #a0a0a0;
  text-align: center;
  line-height: 24px;
}
.btn {
  width: 94px;
  height: 30px;
  padding: 0;
  background: #f0f0f0;
  border: solid;
  border-width: 1px 2px 2px 1px;
  border-color: #fff #707070 #707070 #fff;
}
.btn.wide {
  width: 239px;
  height: 28px;
}
.btn.data {
  width: 224px;
  align-self: flex-start;
}
.row.transfer {
  height: 31px;
  margin-top: 12px;
  align-items: flex-end;
}
.required {
  width: 157px;
  margin-left: 320px;
  line-height: 24px;
}
.row.mode {
  margin-top: 10px;
  align-items: center;
}
.row.zero {
  margin-top: 16px;
  align-items: center;
}
.row.procedure {
  margin-top: 18px;
  align-items: flex-end;
}
.row.procedure .field-label {
  line-height: 22px;
}
.field-label {
  width: 205px;
  margin-right: 17px;
  text-align: right;
}
.combo {
  height: 25px;
  display: flex;
  padding: 0;
  background: #fff;
  border: solid;
  border-width: 2px 1px 1px 2px;
  border-color: #808080 #fff #fff #808080;
}
.combo select {
  flex: 1;
  min-width: 0;
  appearance: none;
  padding: 0 3px;
  border: 0;
  background: none;
  outline: none;
  opacity: 1;
}
.combo.small {
  width: 122px;
}
.combo.medium {
  width: 226px;
}
.combo.full {
  width: 602px;
}
.combo.focused select {
  margin: 1px;
  padding: 0 2px;
  background: #0078d7;
  color: #fff;
  outline: 1px dotted #e08030;
  outline-offset: -1px;
}
.drop {
  flex: none;
  width: 21px;
  display: flex;
  align-items: center;
  justify-content: center;
  background: #f0f0f0;
  border: solid;
  border-width: 1px 2px 2px 1px;
  border-color: #f8f8f8 #808080 #808080 #f8f8f8;
}
.drop::after {
  content: '';
  border: solid transparent;
  border-width: 5px 5px 0;
  border-top-color: #000;
}
.combo.off {
  width: 82px;
  background: #f0f0f0;
  color: #909090;
}
.off .drop::after {
  border-top-color: #909090;
}
input[type='text'] {
  display: block;
  height: 28px;
  padding: 0 3px 5px;
  background: #fff;
  border: solid;
  border-width: 2px 1px 1px 2px;
  border-color: #808080 #fff #fff #808080;
}
.cam-input {
  margin-left: 185px;
  padding-bottom: 2px;
}
.cam-input label {
  display: block;
  margin-bottom: 9px;
}
.cam-input input[type='text'] {
  width: 190px;
  height: 24px;
  padding: 0 0 2px 1px;
}
.rule {
  width: 888px;
  height: 2px;
  margin: 2px 0 0 4px;
  border: 0;
  border-top: 2px solid #b8b8b8;
}
.profile {
  display: flex;
  height: 220px;
}
.velocities {
  width: 268px;
  padding: 12px 0 0 82px;
}
.velocity {
  margin-bottom: 15px;
}
.velocity label {
  display: block;
}
.velocity div {
  display: flex;
  align-items: center;
  gap: 7px;
  padding-left: 7px;
}
.velocity.spaced div {
  margin-top: 5px;
}
.velocity input[type='text'] {
  width: 101px;
}
.diagram {
  flex: none;
  width: 352px;
  height: 204px;
  margin-top: 3px;
}
.limits {
  padding: 10px 0 0 13px;
}
.limits input[type='text'] {
  width: 122px;
}
.limits .limit-cam {
  margin: 11px 0 3px;
}
.limits .limit-zero {
  margin-top: 14px;
}
.check {
  display: flex;
  align-items: center;
  gap: 8px;
  height: 16px;
  white-space: nowrap;
}
.check input {
  flex: none;
  appearance: none;
  width: 15px;
  height: 15px;
  background: #fff;
  border: solid;
  border-width: 2px 1px 1px 2px;
  border-color: #808080 #fff #fff #808080;
}
.check input:disabled {
  background: #f0f0f0;
}
.positions {
  display: flex;
}
.neg {
  width: 259px;
  margin: 0 0 0 4px;
}
.position {
  width: 184px;
  padding-top: 3px;
}
.position + .position {
  width: 198px;
}
.position label {
  display: block;
  margin-bottom: 3px;
  white-space: nowrap;
}
.position input[type='text'] {
  width: 118px;
  margin-left: 4px;
}
.position + .position input[type='text'] {
  width: 114px;
  margin-left: 8px;
}
.check.two-line {
  height: 36px;
  margin-top: 6px;
  white-space: normal;
}
.two-line input {
  margin-bottom: 6px;
}
.two-line span {
  width: 230px;
  line-height: 18px;
}
.actions {
  flex: none;
  height: 46px;
  padding: 0 8px 0 6px;
  display: flex;
  align-items: center;
}
.swatch {
  width: 51px;
  height: 24px;
  background: #0000ff;
  border: solid;
  border-width: 1px;
  border-color: #808080 #fff #fff #808080;
}
.dim {
  color: #a0a0a0;
}
.ads {
  width: 36px;
  margin-left: 22px;
}
.enc {
  width: 34px;
  margin-left: 33px;
}
.actions .enc-input {
  width: 82px;
  height: 25px;
  padding: 0 1px 3px;
  background: #f0f0f0;
  color: #909090;
}
.action-buttons {
  margin-left: auto;
  display: flex;
  gap: 8px;
}
.watermark {
  position: absolute;
  left: 370px;
  top: 284px;
  width: 400px;
  height: 260px;
  overflow: visible;
  pointer-events: none;
}
.watermark text {
  font-family: 'Liberation Sans', 'Noto Sans CJK SC', sans-serif;
  fill: #f4f4f4;
  fill-opacity: 0.4;
  stroke: #c8c8c8;
  stroke-opacity: 0.5;
  stroke-width: 1;
}
.watermark .cjk {
  font-weight: bold;
}

/* document tabs */
.doc-tabs {
  flex: none;
  height: 30px;
  margin: 0 0 0 -3px;
  padding: 4px 0 0 3px;
  display: flex;
  align-items: flex-start;
  gap: 3px;
}
.doc-tab {
  flex: none;
  height: 25px;
  padding: 0 0 0 5px;
  display: flex;
  align-items: center;
  gap: 6px;
  overflow: hidden;
  white-space: nowrap;
  background: #f0f0f0;
  border: solid;
  border-width: 2px 2px 3px 1px;
  border-color: #808080 #707070 #808080 #fff;
  border-radius: 0 0 3px 0;
}
.doc-tab svg {
  flex: none;
  width: 20px;
  height: 20px;
}
.doc-tab.active {
  height: 27px;
  margin-right: -2px;
  border-top-color: #f0f0f0;
}

/* symbol browser */
.lower {
  flex: 281 1 0;
  min-height: 0;
  display: flex;
  margin-top: 5px;
  padding: 1px 4px 4px 1px;
  border-top: 2px solid #b0b0b0;
  border-bottom: 2px solid #c0c0c0;
}
.lower-grip {
  flex: none;
  width: 20px;
  padding-top: 3px;
  display: flex;
  flex-direction: column;
}
.gripper.vertical {
  flex: 1;
  width: 13px;
  margin: 2px 0 0 1px;
  border-width: 2px 3px;
  background: linear-gradient(90deg, #fff 0 2px, #a0a0a0 2px 3px, #fff 3px 6px, #a0a0a0 6px);
}
.lower-body {
  flex: 1;
  min-width: 0;
  display: flex;
  flex-direction: column;
}
.lower-frame {
  flex: 1;
  min-height: 0;
  display: flex;
  margin-top: 4px;
  padding: 5px 2px 0 3px;
  border: solid;
  border-width: 1px 2px 2px 0;
  border-color: #e4e4e4 #707070 #707070 #e4e4e4;
}
.lower-inner {
  flex: 1;
  display: flex;
  justify-content: flex-end;
  padding: 3px 3px 2px 0;
  border: solid;
  border-width: 1px 2px 2px 1px;
  border-color: #fff #909090 #909090 #fff;
}
.lower-thumb {
  height: 75%;
}
.browser-tab {
  flex: none;
  align-self: flex-start;
  height: 27px;
  width: 138px;
  padding: 0 0 0 4px;
  display: flex;
  align-items: center;
  gap: 9px;
  border: solid;
  border-width: 0 2px 3px 1px;
  border-color: #808080 #808080 #808080 #fff;
  border-radius: 0 0 3px 0;
  background: #f0f0f0;
}
.browser-tab svg {
  width: 20px;
  height: 20px;
}

/* status bar */
.status {
  flex: none;
  height: 23px;
  display: flex;
  align-items: stretch;
  line-height: 22px;
  padding-top: 1px;
  color: #202028;
}
.hint {
  flex: 1;
  padding-left: 2px;
}
.cell {
  flex: none;
  margin-left: 2px;
  overflow: hidden;
  white-space: nowrap;
  border-left: 1px solid #a8a8a8;
  border-top: 1px solid #a8a8a8;
}
.adapter {
  width: 266px;
}
.offline {
  width: 266px;
  background: #0000ff;
  color: #fff;
  font-weight: bold;
}
.c1 {
  width: 25px;
}
.c2 {
  width: 36px;
}
.num {
  width: 47px;
  padding-left: 2px;
}
.c3 {
  width: 45px;
}
</style>
